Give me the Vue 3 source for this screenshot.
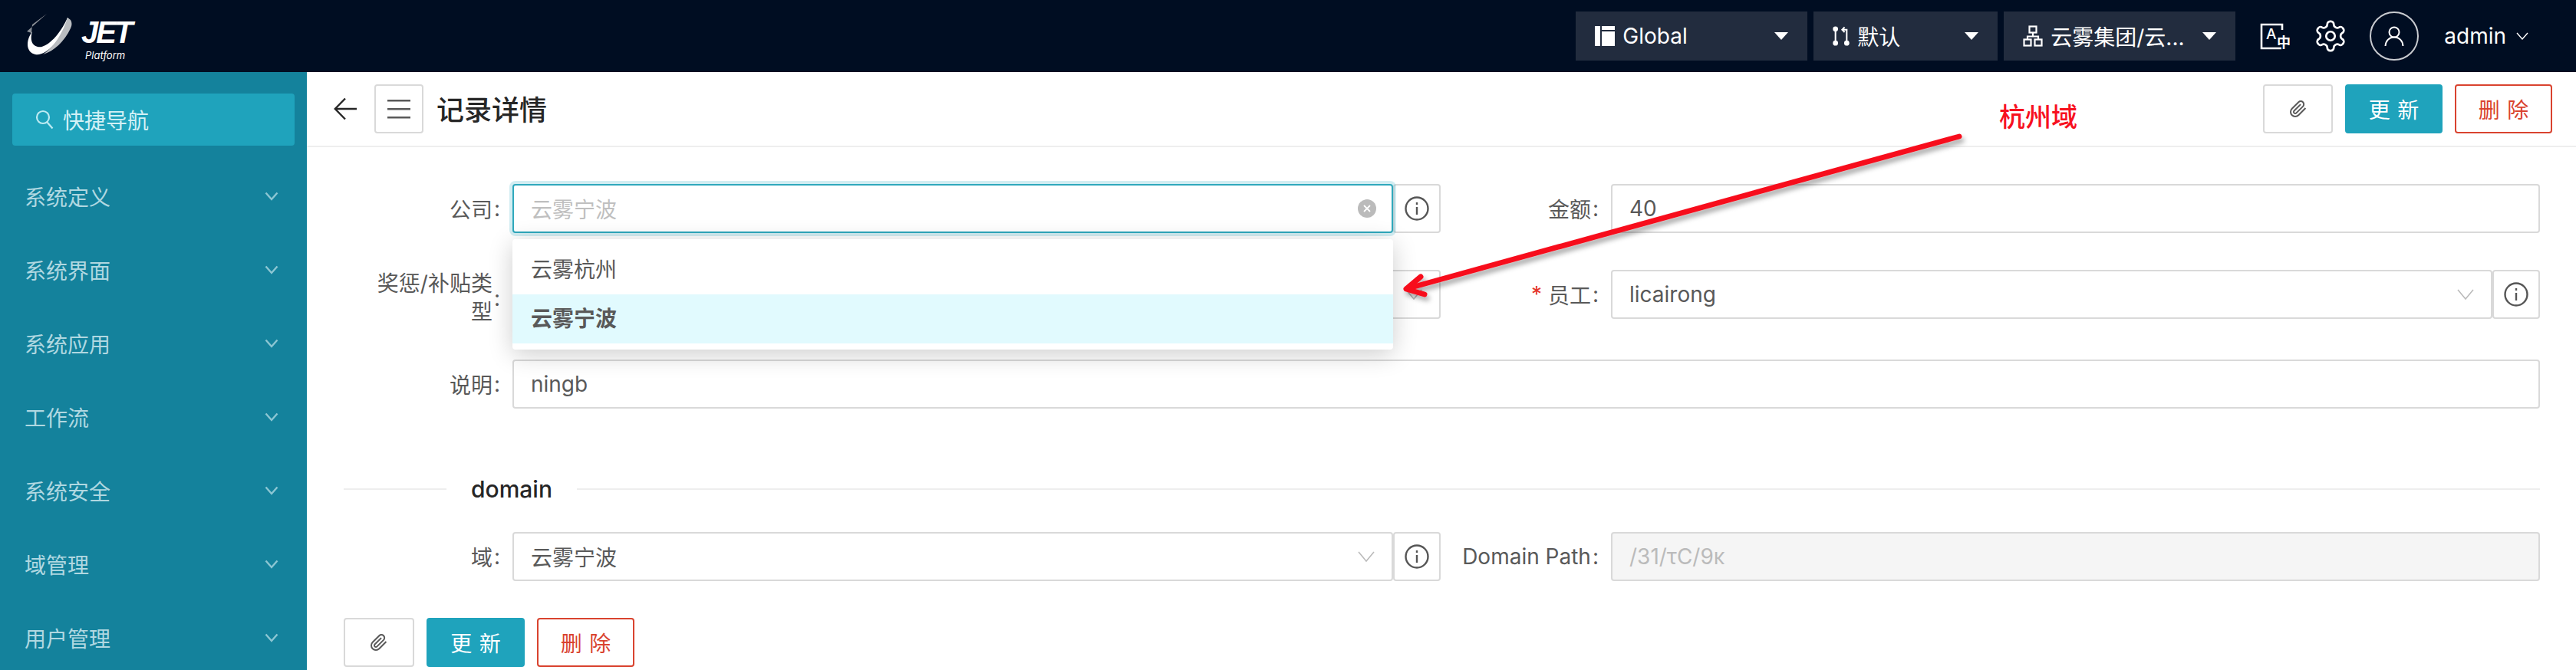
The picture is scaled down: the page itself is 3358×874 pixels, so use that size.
<template>
  <div class="page">
    <header class="topbar">
      <div class="logo">
        <svg class="logo-mark" viewBox="0 0 68 58" width="68" height="58">
          <path d="M3 25 L29 2 L10 16 L9 27 Z" fill="#8a8f96" />
          <path d="M10 25 C1 38 2 52 14 55 C27 58 48 36 59 10 L56 7 C46 30 28 48 17 45 C9 43 7 35 10 25 Z" fill="#fff" />
          <path d="M56 7 L60 10 C62 13 62 17 60 21 C52 38 38 51 24 55 C38 46 50 27 56 7 Z" fill="#b9bcc0" />
        </svg>
        <div class="logo-text">
          <span class="logo-jet">JET</span>
          <span class="logo-sub">Platform</span>
        </div>
      </div>
      <div class="top-right">
        <div class="top-select" v-for="item in topSelects" :key="item.label" :style="{ width: item.width + 'px' }">
          <svg v-if="item.icon === 'layout'" viewBox="0 0 26 26" width="26" height="26" class="top-icon">
            <path d="M0 0h7v26H0zM9 0h17v5H9zM9 7h17v19H9z" fill="#fff" />
          </svg>
          <svg v-else-if="item.icon === 'branch'" viewBox="0 0 24 28" width="22" height="26" class="top-icon" fill="none" stroke="#fff" stroke-width="2.2">
            <circle cx="4" cy="4" r="2.6" fill="#fff" />
            <circle cx="4" cy="24" r="2.6" fill="#fff" />
            <circle cx="20" cy="24" r="2.6" fill="#fff" />
            <path d="M4 6v16M20 22V5h-6M17 1.500l-3.500 3.500 3.500 3.500" />
          </svg>
          <svg v-else viewBox="0 0 26 28" width="26" height="28" class="top-icon" fill="none" stroke="#fff" stroke-width="2.200">
            <rect x="8.500" y="1.500" width="9" height="8" />
            <rect x="1.500" y="18.500" width="9" height="8" />
            <rect x="15.500" y="18.500" width="9" height="8" />
            <path d="M13 9.500v5M6 18.500v-4h14v4" />
          </svg>
          <span class="top-label">{{ item.label }}</span>
          <span class="caret"></span>
        </div>
        <svg class="lang" viewBox="0 0 40 35" width="40" height="35">
          <path d="M29 9V2H2v31h26" fill="none" stroke="#fff" stroke-width="2.600" />
          <text x="8" y="21" class="lang-a">A</text>
          <text x="22" y="32" class="lang-zh">中</text>
        </svg>
        <svg class="gear" viewBox="0 0 24 24" width="46" height="46" fill="none" stroke="#fff" stroke-width="1.400">
          <path d="M12.220 2h-.44a2 2 0 0 0-2 2v.18a2 2 0 0 1-1 1.730l-.43.25a2 2 0 0 1-2 0l-.15-.08a2 2 0 0 0-2.730.73l-.22.38a2 2 0 0 0 .73 2.730l.15.1a2 2 0 0 1 1 1.720v.51a2 2 0 0 1-1 1.740l-.15.09a2 2 0 0 0-.73 2.730l.22.38a2 2 0 0 0 2.730.73l.15-.08a2 2 0 0 1 2 0l.43.25a2 2 0 0 1 1 1.730V20a2 2 0 0 0 2 2h.44a2 2 0 0 0 2-2v-.18a2 2 0 0 1 1-1.730l.43-.25a2 2 0 0 1 2 0l.15.08a2 2 0 0 0 2.730-.73l.22-.39a2 2 0 0 0-.73-2.730l-.15-.08a2 2 0 0 1-1-1.740v-.5a2 2 0 0 1 1-1.740l.15-.09a2 2 0 0 0 .73-2.730l-.22-.38a2 2 0 0 0-2.730-.73l-.15.08a2 2 0 0 1-2 0l-.43-.25a2 2 0 0 1-1-1.730V4a2 2 0 0 0-2-2z" />
          <circle cx="12" cy="12" r="3" />
        </svg>
        <div class="avatar">
          <svg viewBox="0 0 26 28" width="26" height="28" fill="none" stroke="#fff" stroke-width="2">
            <circle cx="13" cy="9" r="6.500" />
            <path d="M1.500 27c.5-7 5-11.500 11.500-11.500S24 20 24.500 27" />
          </svg>
        </div>
        <span class="user-name">admin</span>
        <svg class="user-caret" viewBox="0 0 16 10" width="16" height="10" fill="none" stroke="#fff" stroke-width="1.400">
          <path d="M1 1l7 8 7-8" />
        </svg>
      </div>
    </header>

    <div class="body">
      <aside class="sidebar">
        <div class="quick">
          <svg viewBox="0 0 24 26" width="24" height="26" fill="none" stroke="#bdeaf2" stroke-width="2.200">
            <circle cx="10" cy="10" r="8" />
            <path d="M15.500 16.500l7 8" />
          </svg>
          <span>快捷导航</span>
        </div>
        <div class="menu-item" v-for="name in menus" :key="name">
          <span>{{ name }}</span>
          <svg viewBox="0 0 18 12" width="18" height="12" fill="none" stroke="#8cc6d3" stroke-width="2.400">
            <path d="M1.500 1.500L9 10l7.500-8.500" />
          </svg>
        </div>
      </aside>

      <main class="main">
        <div class="toolbar">
          <svg class="back" viewBox="0 0 30 30" width="30" height="30" fill="none" stroke="#262626" stroke-width="2.400">
            <path d="M30 15H2M15 1.500L1.800 15 15 28.500" />
          </svg>
          <div class="menu-btn">
            <svg viewBox="0 0 30 26" width="30" height="26" fill="#595959">
              <path d="M0 1h30v2.500H0zM0 12h30v2.500H0zM0 23h30v2.500H0z" />
            </svg>
          </div>
          <h1 class="title">记录详情</h1>
          <div class="actions">
            <button class="btn btn-clip">
              <svg viewBox="0 0 24 24" width="24" height="24" fill="none" stroke="#595959" stroke-width="2">
                <path d="M21.440 11.050l-9.190 9.190a6 6 0 0 1-8.490-8.490l8.570-8.570A4 4 0 1 1 18 8.840l-8.590 8.570a2 2 0 0 1-2.830-2.830l8.490-8.480" />
              </svg>
            </button>
            <button class="btn btn-primary"><span>更新</span></button>
            <button class="btn btn-danger"><span>删除</span></button>
          </div>
        </div>

        <form class="form" @submit.prevent>
          <div class="row">
            <label class="label">公司</label>
            <div class="group">
              <div class="field focused">
                <span class="placeholder">云雾宁波</span>
                <svg class="clear" viewBox="0 0 24 24" width="24" height="24">
                  <circle cx="12" cy="12" r="12" fill="#bbb" />
                  <path d="M8 8l8 8M16 8l-8 8" stroke="#fff" stroke-width="1.800" />
                </svg>
                <div class="dropdown">
                  <div class="option">云雾杭州</div>
                  <div class="option selected">云雾宁波</div>
                </div>
              </div>
              <div class="addon">
                <svg viewBox="0 0 32 32" width="32" height="32" fill="none" stroke="#555" stroke-width="2.400">
                  <circle cx="16" cy="16" r="14.500" />
                  <path d="M16 14v10M16 8v3" />
                </svg>
              </div>
            </div>
            <label class="label">金额</label>
            <div class="field"><span>40</span></div>
          </div>

          <div class="row row-tall">
            <label class="label label-wrap"><span>奖惩/补贴类型</span></label>
            <div class="group">
              <div class="field">
                <span>奖励</span>
                <svg class="chevron" viewBox="0 0 22 14" width="22" height="14" fill="none" stroke="#bbb" stroke-width="1.600">
                  <path d="M1 1l10 12L21 1" />
                </svg>
              </div>
            </div>
            <label class="label"><em>*</em>员工</label>
            <div class="group">
              <div class="field">
                <span>licairong</span>
                <svg class="chevron" viewBox="0 0 22 14" width="22" height="14" fill="none" stroke="#bbb" stroke-width="1.600">
                  <path d="M1 1l10 12L21 1" />
                </svg>
              </div>
              <div class="addon">
                <svg viewBox="0 0 32 32" width="32" height="32" fill="none" stroke="#555" stroke-width="2.400">
                  <circle cx="16" cy="16" r="14.500" />
                  <path d="M16 14v10M16 8v3" />
                </svg>
              </div>
            </div>
          </div>

          <div class="row row-wide">
            <label class="label">说明</label>
            <div class="field"><span>ningb</span></div>
          </div>

          <div class="divider"><span>domain</span></div>

          <div class="row">
            <label class="label">域</label>
            <div class="group">
              <div class="field">
                <span>云雾宁波</span>
                <svg class="chevron" viewBox="0 0 22 14" width="22" height="14" fill="none" stroke="#bbb" stroke-width="1.600">
                  <path d="M1 1l10 12L21 1" />
                </svg>
              </div>
              <div class="addon">
                <svg viewBox="0 0 32 32" width="32" height="32" fill="none" stroke="#555" stroke-width="2.400">
                  <circle cx="16" cy="16" r="14.500" />
                  <path d="M16 14v10M16 8v3" />
                </svg>
              </div>
            </div>
            <label class="label">Domain Path</label>
            <div class="field disabled"><span>/31/τC/9κ</span></div>
          </div>

          <div class="bottom-actions">
            <button class="btn btn-clip">
              <svg viewBox="0 0 24 24" width="24" height="24" fill="none" stroke="#595959" stroke-width="2">
                <path d="M21.440 11.050l-9.190 9.190a6 6 0 0 1-8.490-8.490l8.570-8.570A4 4 0 1 1 18 8.840l-8.590 8.570a2 2 0 0 1-2.830-2.830l8.490-8.480" />
              </svg>
            </button>
            <button class="btn btn-primary"><span>更新</span></button>
            <button class="btn btn-danger"><span>删除</span></button>
          </div>
        </form>
      </main>
    </div>

    <!-- annotation drawn on top of the screenshot -->
    <svg class="annotation" viewBox="0 0 3358 874" width="3358" height="874" fill="none">
      <defs>
        <filter id="arrow-shadow" x="-5%" y="-10%" width="110%" height="130%">
          <feDropShadow dx="3" dy="5" stdDeviation="3" flood-color="#000" flood-opacity="0.35" />
        </filter>
      </defs>
      <g filter="url(#arrow-shadow)" stroke="#f7111f" stroke-linecap="round" stroke-linejoin="round">
        <path d="M2554 178L1836 376" stroke-width="7" />
        <path d="M1852 361L1833 377L1857 384" stroke-width="7" />
      </g>
    </svg>
    <span class="annotation-text">杭州域</span>
  </div>
</template>

<script setup>
const topSelects = [
  { label: 'Global', icon: 'layout', width: 302 },
  { label: '默认', icon: 'branch', width: 240 },
  { label: '云雾集团/云...', icon: 'org', width: 302 }
]

const menus = ['系统定义', '系统界面', '系统应用', '工作流', '系统安全', '域管理', '用户管理']
</script>

<style>
html,
body {
  margin: 0;
  overflow: hidden;
  background: #fff;
}
</style>

<style scoped>
.page {
  position: relative;
  width: 3358px;
  height: 874px;
  overflow: hidden;
  font-family: Inter, "Noto Sans CJK SC", sans-serif;
  font-size: 28px;
  color: #595959;
}

.topbar {
  display: flex;
  align-items: center;
  justify-content: space-between;
  height: 94px;
  padding: 0 62px 0 32px;
  box-sizing: border-box;
  background-color: #000d22;
}

.logo {
  display: flex;
  align-items: flex-start;
  gap: 6px;
  margin-top: 3px;
}

.logo-text {
  display: flex;
  flex-direction: column;
  color: #fff;
  font-style: italic;
}

.logo-jet {
  font-family: "Liberation Sans", sans-serif;
  font-size: 40px;
  font-weight: 700;
  line-height: 44px;
  letter-spacing: -3px;
  margin-top: 4px;
}

.logo-sub {
  margin: -1px 0 0 5px;
  font-size: 13px;
  line-height: 18px;
}

.top-right {
  display: flex;
  align-items: center;
  color: #fff;
}

.top-select {
  display: flex;
  align-items: center;
  height: 64px;
  margin-right: 8px;
  padding: 0 25px;
  box-sizing: border-box;
  background-color: #222c3e;
  white-space: nowrap;
}

.top-icon {
  flex-shrink: 0;
  margin-right: 10px;
}

.caret {
  width: 0;
  height: 0;
  margin-left: auto;
  border-left: 9px solid transparent;
  border-right: 9px solid transparent;
  border-top: 10px solid #fff;
}

.lang {
  margin-left: 24px;
  overflow: visible;
}

.lang-a {
  font-family: Inter, sans-serif;
  font-size: 19px;
  font-weight: 500;
  fill: #fff;
}

.lang-zh {
  font-family: "Noto Sans CJK SC", sans-serif;
  font-size: 18px;
  font-weight: 700;
  fill: #fff;
}

.gear {
  margin-left: 29px;
}

.avatar {
  display: flex;
  align-items: center;
  justify-content: center;
  width: 64px;
  height: 64px;
  margin-left: 28px;
  box-sizing: border-box;
  border: 2px solid #c8cbd0;
  border-radius: 50%;
}

.user-name {
  margin-left: 33px;
}

.user-caret {
  margin-left: 13px;
}

.body {
  display: flex;
  height: 780px;
}

.sidebar {
  flex-shrink: 0;
  width: 400px;
  padding: 28px 16px 0;
  box-sizing: border-box;
  background-color: #14829c;
  overflow: hidden;
}

.quick {
  display: flex;
  align-items: center;
  gap: 12px;
  height: 68px;
  margin-bottom: 26px;
  padding-left: 30px;
  border-radius: 4px;
  background-color: #1fa3bc;
  color: #d3f1f6;
}

.menu-item {
  display: flex;
  align-items: center;
  justify-content: space-between;
  height: 80px;
  margin: 0 21px 16px 0;
  padding-left: 16px;
  color: #b0d8e1;
}

.main {
  flex: 1;
  min-width: 0;
}

.toolbar {
  display: flex;
  align-items: center;
  height: 98px;
  padding: 0 31px 0 35px;
  box-sizing: border-box;
  border-bottom: 2px solid #eee;
}

.menu-btn {
  display: flex;
  align-items: center;
  justify-content: center;
  width: 64px;
  height: 64px;
  margin-left: 23px;
  box-sizing: border-box;
  border: 2px solid #d9d9d9;
  border-radius: 4px;
}

.title {
  margin: -2px 0 0 17px;
  font-size: 36px;
  font-weight: 500;
  color: #262626;
}

.actions {
  display: flex;
  gap: 16px;
  margin-left: auto;
}

.btn {
  display: flex;
  align-items: center;
  justify-content: center;
  height: 64px;
  padding: 0;
  box-sizing: border-box;
  border: 2px solid #d9d9d9;
  border-radius: 4px;
  background: #fff;
  font: inherit;
}

.btn span {
  letter-spacing: 0.34em;
  margin-right: -0.34em;
}

.btn-clip {
  width: 91px;
}

.btn-primary {
  width: 127px;
  border-color: #1fa3bc;
  background-color: #1fa3bc;
  color: #fff;
}

.btn-danger {
  width: 127px;
  border-color: #d9432f;
  color: #d9432f;
}

.form {
  padding: 48px 47px 0 48px;
}

.row {
  display: grid;
  grid-template-columns: 220px 1210px 222px 1fr;
  margin-bottom: 48px;
}

.row-tall {
  height: 69px;
}

.row-wide {
  grid-template-columns: 220px 1fr;
}

.label {
  display: flex;
  align-items: center;
  justify-content: flex-end;
  height: 64px;
  padding-right: 16px;
  white-space: nowrap;
}

.label::after {
  content: ":";
  margin-left: 2px;
}

.label em {
  margin-right: 8px;
  font-style: normal;
  color: #e5352b;
}

.label-wrap {
  height: 74px;
  white-space: normal;
  text-align: right;
  line-height: 37px;
}

.label-wrap span {
  width: 152px;
}

.group {
  display: flex;
  min-width: 0;
}

.field {
  position: relative;
  display: flex;
  flex: 1;
  align-items: center;
  height: 64px;
  padding: 0 22px;
  box-sizing: border-box;
  border: 2px solid #d9d9d9;
  border-radius: 4px;
  background-color: #fff;
}

.focused {
  border-color: #2fa8bc;
  box-shadow: 0 0 0 4px rgba(31, 163, 188, 0.2);
}

.disabled {
  background-color: #f5f5f5;
  color: #bbb;
}

.placeholder {
  color: #bfbfbf;
}

.clear {
  margin-left: auto;
  margin-right: -2px;
}

.chevron {
  margin-left: auto;
}

.dropdown {
  position: absolute;
  top: 70px;
  left: -2px;
  right: -2px;
  z-index: 2;
  padding: 8px 0;
  border-radius: 4px;
  background-color: #fff;
  box-shadow: 0 6px 32px rgba(0, 0, 0, 0.2);
}

.option {
  height: 64px;
  padding-left: 24px;
  line-height: 64px;
}

.selected {
  background-color: #e1fafe;
  font-weight: 600;
}

.addon {
  display: flex;
  flex-shrink: 0;
  align-items: center;
  justify-content: center;
  width: 62px;
  height: 64px;
  box-sizing: border-box;
  border: 2px solid #d9d9d9;
  border-radius: 4px;
  background-color: #fff;
}

.divider {
  display: flex;
  align-items: center;
  height: 44px;
  margin: 83px 0 34px;
  font-size: 30px;
  font-weight: 500;
  color: #262626;
}

.divider::before {
  content: "";
  width: 134px;
  height: 2px;
  background-color: #eee;
}

.divider::after {
  content: "";
  flex: 1;
  height: 2px;
  background-color: #eee;
}

.divider span {
  padding: 0 32px;
}

.bottom-actions {
  display: flex;
  gap: 16px;
}

.bottom-actions .btn-clip {
  width: 92px;
}

.bottom-actions .btn-primary {
  width: 128px;
}

.annotation {
  position: absolute;
  top: 0;
  left: 0;
  z-index: 5;
  pointer-events: none;
}

.annotation-text {
  position: absolute;
  top: 126px;
  left: 2606px;
  z-index: 5;
  font-size: 34px;
  font-weight: 500;
  color: #f7111f;
}
</style>
